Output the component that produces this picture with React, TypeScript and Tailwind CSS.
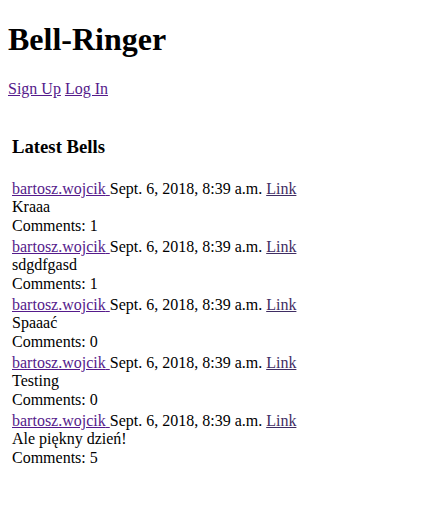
import React from 'react';

type Bell = {
    author: string;
    date: string;
    text: string;
    comments: number;
};

const BELLS: Bell[] = [
    { author: 'bartosz.wojcik', date: 'Sept. 6, 2018, 8:39 a.m.', text: 'Kraaa', comments: 1 },
    { author: 'bartosz.wojcik', date: 'Sept. 6, 2018, 8:39 a.m.', text: 'sdgdfgasd', comments: 1 },
    { author: 'bartosz.wojcik', date: 'Sept. 6, 2018, 8:39 a.m.', text: 'Spaaać', comments: 0 },
    { author: 'bartosz.wojcik', date: 'Sept. 6, 2018, 8:39 a.m.', text: 'Testing', comments: 0 },
    { author: 'bartosz.wojcik', date: 'Sept. 6, 2018, 8:39 a.m.', text: 'Ale piękny dzień!', comments: 5 },
];

const App: React.FC = () => {
    return (
        <div className="flex flex-col px-[8px] font-['Liberation_Serif',serif] text-[16px] leading-[18.4px] text-black bg-white min-h-screen">
            <h1 className="mt-[21.44px] mb-[21.44px] text-[32px] leading-[36.8px] font-bold">Bell-Ringer</h1>

            <p className="mb-[16px]">
                <a href="#" className="text-[#551a8b] underline">Sign Up</a>{' '}
                <a href="#" className="text-[#551a8b] underline">Log In</a>
            </p>

            {/* Bell list */}
            <div className="flex flex-col p-[4px]">
                <h3 className="mt-[17.7px] mb-[18.72px] text-[18.72px] leading-[21.5px] font-bold">Latest Bells</h3>
                <div className="flex flex-col gap-[2.8px] mt-[4px]">
                    {BELLS.map((bell, i) => (
                        <div key={i} className="flex flex-col">
                            <div>
                                <a href="#" className="text-[#551a8b] underline">{bell.author} </a>
                                {bell.date}{' '}
                                <a href="#" className="text-[#3f2d63] underline">Link</a>
                            </div>
                            <div>{bell.text}</div>
                            <div>Comments: {bell.comments}</div>
                        </div>
                    ))}
                </div>
            </div>
        </div>
    );
};

export default App;
